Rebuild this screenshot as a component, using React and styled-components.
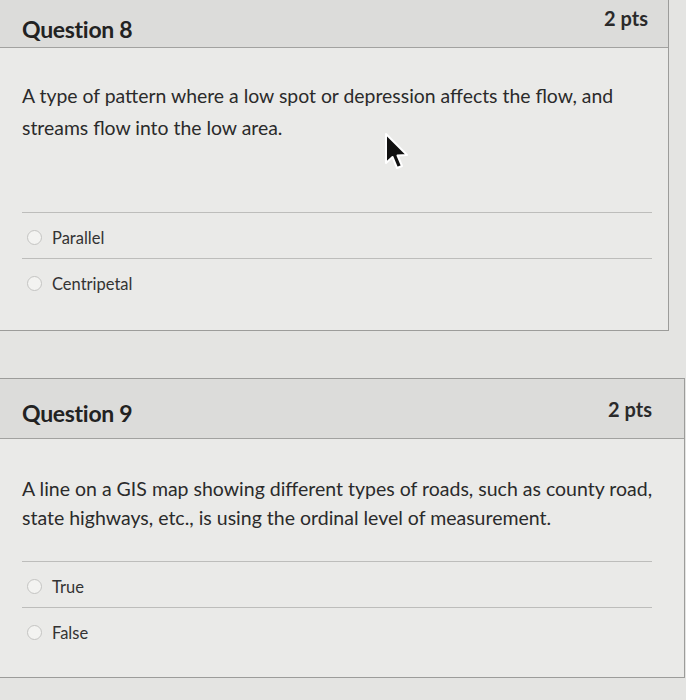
import React from 'react';
import styled, { createGlobalStyle } from 'styled-components';

const GlobalStyle = createGlobalStyle`
  html, body {
    margin: 0;
    padding: 0;
    background: #e4e4e2;
  }
  body {
    font-family: Lato, "Open Sans", sans-serif;
    color: #2b2b2b;
  }
`;

// Styled components
const Page = styled.div`
  width: 686px;
  height: 700px;
  overflow: hidden;
  display: flex;
  flex-direction: column;
  gap: 47px;
  position: relative;
`;

const Card = styled.section`
  width: ${p => p.width}px;
  margin-top: ${p => p.top || 0}px;
  background: #eaeae8;
  border: 1px solid #9c9c9a;
  border-left: none;
  position: relative;
`;

const Header = styled.header`
  height: ${p => p.height}px;
  background: #dcdcda;
  border-bottom: 1px solid #a2a2a0;
  display: flex;
  justify-content: space-between;
  align-items: center;
  padding: 0 ${p => p.right}px 0 22px;
  box-sizing: border-box;
`;

const Title = styled.h2`
  margin: ${p => p.shift || 0}px 0 0;
  font-size: 23px;
  font-weight: 700;
  letter-spacing: -0.3px;
  color: #222;
`;

const Points = styled.span`
  margin-top: ${p => p.shift || 0}px;
  font-size: 20px;
  font-weight: 700;
  color: #2a2a2a;
`;

const Body = styled.div`
  padding: ${p => p.top}px 16px ${p => p.bottom}px 22px;
`;

const Text = styled.p`
  margin: 0 0 ${p => p.gap}px;
  font-size: ${p => p.size}px;
  line-height: ${p => p.lh}px;
  color: #2b2b2b;
`;

const Answers = styled.div`
  margin-right: ${p => p.right}px;
`;

const Answer = styled.label`
  display: flex;
  align-items: center;
  gap: 10px;
  height: ${p => p.h}px;
  padding: 4px 0 0 5px;
  box-sizing: border-box;
  border-top: 1px solid #bdbdbb;
  font-size: 16.5px;
  color: #333;
`;

const Radio = styled.span`
  width: 13px;
  height: 13px;
  border-radius: 50%;
  border: 1px solid #c4c4c2;
  background: #f3f3f1;
  flex-shrink: 0;
`;

const Cursor = styled.svg`
  position: absolute;
  left: 382px;
  top: 131px;
`;

const questions = [
  {
    title: 'Question 8',
    width: 668,
    top: -1,
    headerH: 48,
    titleShift: 10,
    ptsShift: -12,
    right: 20,
    text: 'A type of pattern where a low spot or depression affects the flow, and streams flow into the low area.',
    size: 19.4,
    bodyTop: 32,
    lh: 32,
    gap: 68,
    bottom: 26,
    rowH: 46,
    answers: ['Parallel', 'Centripetal'],
  },
  {
    title: 'Question 9',
    width: 684,
    top: 0,
    headerH: 60,
    titleShift: 8,
    ptsShift: 0,
    right: 32,
    text: 'A line on a GIS map showing different types of roads, such as county road, state highways, etc., is using the ordinal level of measurement.',
    size: 19.5,
    bodyTop: 35,
    lh: 29,
    gap: 29,
    bottom: 24,
    rowH: 46,
    answers: ['True', 'False'],
  },
];

const App = () => {
  return (
    <Page>
      <GlobalStyle />
      {questions.map(q => (
        <Card key={q.title} width={q.width} top={q.top}>
          <Header height={q.headerH} right={q.right}>
            <Title shift={q.titleShift}>{q.title}</Title>
            <Points shift={q.ptsShift}>2 pts</Points>
          </Header>
          <Body top={q.bodyTop} bottom={q.bottom}>
            <Text size={q.size} lh={q.lh} gap={q.gap}>{q.text}</Text>
            <Answers right={q.width - 668}>
              {q.answers.map(a => (
                <Answer key={a} h={q.rowH}>
                  <Radio />
                  {a}
                </Answer>
              ))}
            </Answers>
          </Body>
        </Card>
      ))}
      <Cursor width="32" height="42" viewBox="0 0 32 42">
        <path
          d="M4 3 L4 32 L10.5 26 L15 37 L20 35 L15.5 24.5 L25 24 Z"
          fill="#111"
          stroke="#fff"
          strokeWidth="2"
          strokeLinejoin="round"
        />
      </Cursor>
    </Page>
  );
};

export default App;
